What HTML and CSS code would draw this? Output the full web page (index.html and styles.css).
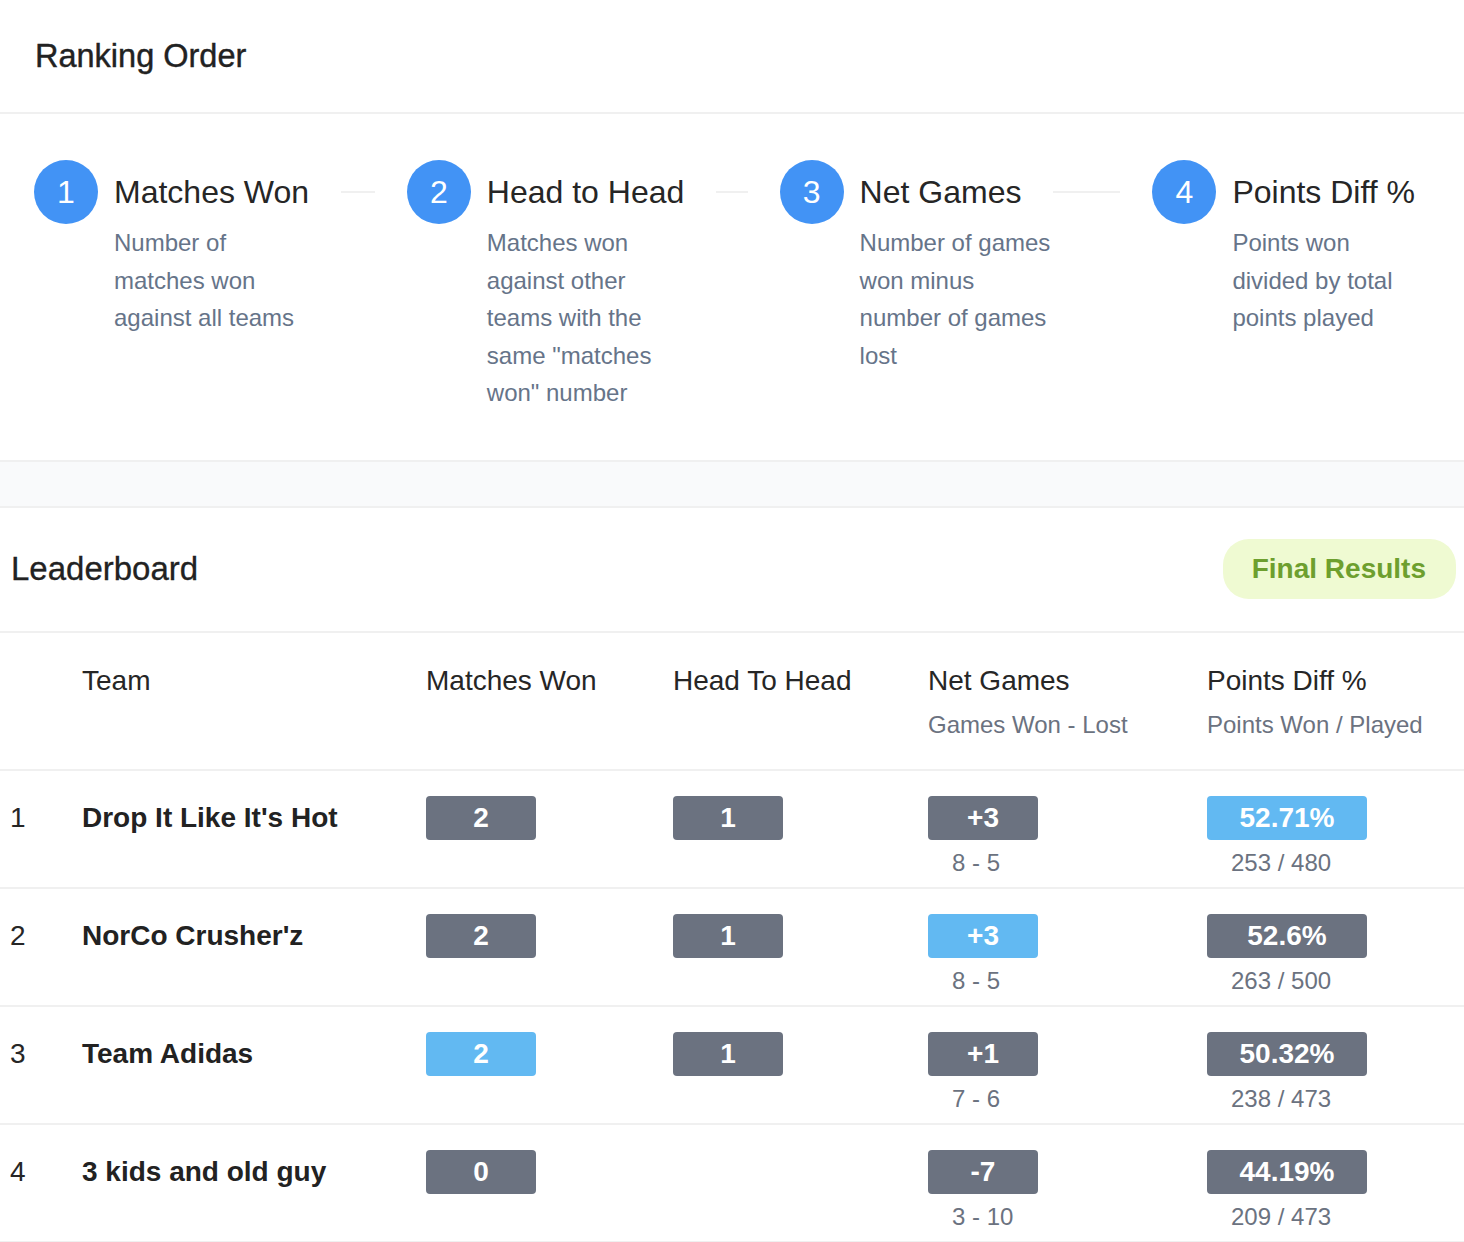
FILE: index.html
```html
<!DOCTYPE html>
<html lang="en">
<head>
<meta charset="utf-8">
<title>Ranking Order &amp; Leaderboard</title>
<link rel="stylesheet" href="styles.css">
</head>
<body>
<section class="ranking">
  <div class="ranking-head">Ranking Order</div>
  <div class="steps">
    <div class="step">
      <div class="step-icon">1</div>
      <div class="step-content">
        <div class="step-title">Matches Won</div>
        <div class="step-desc">Number of matches won against all teams</div>
      </div>
    </div>
    <div class="step">
      <div class="step-icon">2</div>
      <div class="step-content">
        <div class="step-title">Head to Head</div>
        <div class="step-desc">Matches won against other teams with the same "matches won" number</div>
      </div>
    </div>
    <div class="step">
      <div class="step-icon">3</div>
      <div class="step-content">
        <div class="step-title">Net Games</div>
        <div class="step-desc">Number of games won minus number of games lost</div>
      </div>
    </div>
    <div class="step step-last">
      <div class="step-icon">4</div>
      <div class="step-content">
        <div class="step-title">Points Diff %</div>
        <div class="step-desc">Points won divided by total points played</div>
      </div>
    </div>
  </div>
</section>

<div class="band"></div>

<section class="leaderboard">
  <div class="lb-head">
    <h2 class="lb-title">Leaderboard</h2>
    <span class="tag">Final Results</span>
  </div>
  <div class="table">
    <div class="row head">
      <div class="cell"></div>
      <div class="cell"><div class="th">Team</div></div>
      <div class="cell"><div class="th">Matches Won</div></div>
      <div class="cell"><div class="th">Head To Head</div></div>
      <div class="cell"><div class="th">Net Games</div><div class="th-sub">Games Won - Lost</div></div>
      <div class="cell"><div class="th">Points Diff %</div><div class="th-sub">Points Won / Played</div></div>
    </div>

    <div class="row">
      <div class="cell rank">1</div>
      <div class="cell team">Drop It Like It's Hot</div>
      <div class="cell"><div class="stat"><span class="badge">2</span></div></div>
      <div class="cell"><div class="stat"><span class="badge">1</span></div></div>
      <div class="cell"><div class="stat"><span class="badge">+3</span><span class="sub">8 - 5</span></div></div>
      <div class="cell"><div class="stat wide"><span class="badge hl">52.71%</span><span class="sub">253 / 480</span></div></div>
    </div>

    <div class="row">
      <div class="cell rank">2</div>
      <div class="cell team">NorCo Crusher'z</div>
      <div class="cell"><div class="stat"><span class="badge">2</span></div></div>
      <div class="cell"><div class="stat"><span class="badge">1</span></div></div>
      <div class="cell"><div class="stat"><span class="badge hl">+3</span><span class="sub">8 - 5</span></div></div>
      <div class="cell"><div class="stat wide"><span class="badge">52.6%</span><span class="sub">263 / 500</span></div></div>
    </div>

    <div class="row">
      <div class="cell rank">3</div>
      <div class="cell team">Team Adidas</div>
      <div class="cell"><div class="stat"><span class="badge hl">2</span></div></div>
      <div class="cell"><div class="stat"><span class="badge">1</span></div></div>
      <div class="cell"><div class="stat"><span class="badge">+1</span><span class="sub">7 - 6</span></div></div>
      <div class="cell"><div class="stat wide"><span class="badge">50.32%</span><span class="sub">238 / 473</span></div></div>
    </div>

    <div class="row">
      <div class="cell rank">4</div>
      <div class="cell team">3 kids and old guy</div>
      <div class="cell"><div class="stat"><span class="badge">0</span></div></div>
      <div class="cell"></div>
      <div class="cell"><div class="stat"><span class="badge">-7</span><span class="sub">3 - 10</span></div></div>
      <div class="cell"><div class="stat wide"><span class="badge">44.19%</span><span class="sub">209 / 473</span></div></div>
    </div>
  </div>
</section>
</body>
</html>
```

FILE: styles.css
```css
* { box-sizing: border-box; }

html, body {
  margin: 0;
  padding: 0;
  background: #ffffff;
  font-family: "Liberation Sans", Arial, Helvetica, sans-serif;
  color: #262626;
}

/* ---------- Ranking order ---------- */
.ranking-head {
  height: 114px;
  padding-left: 35px;
  display: flex;
  align-items: center;
  font-size: 32.5px;
  line-height: 40px;
  color: #222222;
  border-bottom: 2px solid #f0f0f0;
  -webkit-text-stroke: 0.4px #222222;
}

.steps {
  display: flex;
  padding: 46px 17px 48px 34px;
}

.step {
  flex: 1 1 0;
  display: flex;
  align-items: flex-start;
  overflow: hidden;
  padding-left: 32px;
}
.step:first-child { padding-left: 0; }
.step-last { flex: none; }

.step-icon {
  flex: none;
  width: 64px;
  height: 64px;
  border-radius: 50%;
  background: #4293f5;
  color: #ffffff;
  font-size: 32px;
  line-height: 64px;
  text-align: center;
  margin-right: 16px;
}

.step-content { min-width: 0; }

.step-title {
  position: relative;
  display: inline-block;
  padding-right: 32px;
  font-size: 32px;
  line-height: 64px;
  white-space: nowrap;
  color: #262626;
}
.step-title::after {
  content: "";
  position: absolute;
  left: 100%;
  top: 31px;
  width: 9999px;
  height: 2px;
  background: #f0f0f0;
}
.step-last .step-title::after { display: none; }

.step-desc {
  max-width: 196px;
  font-size: 24px;
  line-height: 37.5px;
  color: #667489;
}

/* ---------- band ---------- */
.band {
  height: 48px;
  background: #f9fafb;
  border-top: 2px solid #f0f0f0;
  border-bottom: 2px solid #f0f0f0;
}

/* ---------- Leaderboard ---------- */
.lb-head {
  height: 125px;
  display: flex;
  align-items: center;
  justify-content: space-between;
  padding: 0 8px 0 11px;
  border-bottom: 2px solid #f0f0f0;
}

.lb-title {
  margin: 0;
  font-size: 33px;
  font-weight: normal;
  line-height: 40px;
  color: #222222;
  -webkit-text-stroke: 0.3px #222222;
}

.tag {
  height: 60px;
  line-height: 60px;
  padding: 0 30px 0 29px;
  border-radius: 26px;
  background: #effad2;
  color: #6d9f2e;
  font-size: 28px;
  font-weight: bold;
}

.row {
  display: grid;
  grid-template-columns: 72px 344px 247px 255px 279px 1fr;
  height: 118px;
  padding: 25px 0 0 10px;
  border-bottom: 2px solid #f0f0f0;
  align-items: start;
}
.row.head {
  height: 138px;
  padding-top: 30px;
}

.th {
  font-size: 28px;
  line-height: 36px;
  color: #262626;
}
.th-sub {
  margin-top: 8px;
  font-size: 24px;
  line-height: 36px;
  color: #6b7280;
}

.rank {
  font-size: 28px;
  line-height: 44px;
  color: #262626;
}
.team {
  font-size: 28px;
  line-height: 44px;
  font-weight: bold;
  color: #222222;
  white-space: nowrap;
}

.stat {
  display: flex;
  flex-direction: column;
  width: 110px;
}
.stat.wide { width: 160px; }

.badge {
  display: block;
  height: 44px;
  line-height: 44px;
  border-radius: 4px;
  background: #6b7280;
  color: #ffffff;
  font-size: 28px;
  font-weight: bold;
  text-align: center;
}
.badge.hl { background: #62b9f2; }

.sub {
  display: block;
  margin-top: 5px;
  padding-left: 24px;
  font-size: 24px;
  line-height: 36px;
  white-space: nowrap;
  color: #6b7280;
}
```
